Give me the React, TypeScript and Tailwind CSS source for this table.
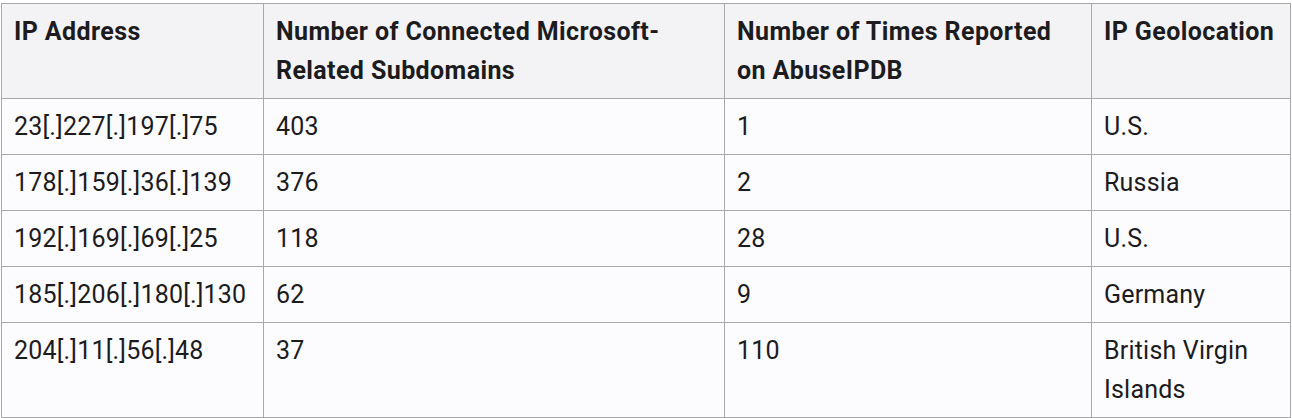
import React from "react";

const rows: [string, string, string, string][] = [
  ["23[.]227[.]197[.]75", "403", "1", "U.S."],
  ["178[.]159[.]36[.]139", "376", "2", "Russia"],
  ["192[.]169[.]69[.]25", "118", "28", "U.S."],
  ["185[.]206[.]180[.]130", "62", "9", "Germany"],
  ["204[.]11[.]56[.]48", "37", "110", "British Virgin Islands"],
];

const headers = [
  "IP Address",
  "Number of Connected Microsoft-Related Subdomains",
  "Number of Times Reported on AbuseIPDB",
  "IP Geolocation",
];

export default function App() {
  return (
    <div
      className="w-[1292px] h-[418px] bg-white pt-[3px] pl-[1px] overflow-hidden"
      style={{ fontFamily: "Roboto, 'Liberation Sans', sans-serif" }}
    >
      <table className="table-fixed border-collapse w-[1289px] leading-[39px] text-[#1c1c1e]">
        <colgroup>
          <col className="w-[262px]" />
          <col className="w-[461px]" />
          <col className="w-[367px]" />
          <col className="w-[199px]" />
        </colgroup>
        <thead>
          <tr className="bg-[#f3f2f5]">
            {headers.map((h) => (
              <th
                key={h}
                className="border border-[#a9a9ab] pl-[12px] pr-[10px] py-[8px] text-left align-top font-bold text-[25px] tracking-[0.4px]"
              >
                {h}
              </th>
            ))}
          </tr>
        </thead>
        <tbody>
          {rows.map((r) => (
            <tr key={r[0]} className="bg-[#fcfbfd]">
              {r.map((c, i) => (
                <td
                  key={i}
                  className="border border-[#a9a9ab] pl-[12px] pr-[10px] py-[8px] text-left align-top font-normal text-[25px] tracking-[0.2px]"
                >
                  {c}
                </td>
              ))}
            </tr>
          ))}
        </tbody>
      </table>
    </div>
  );
}
